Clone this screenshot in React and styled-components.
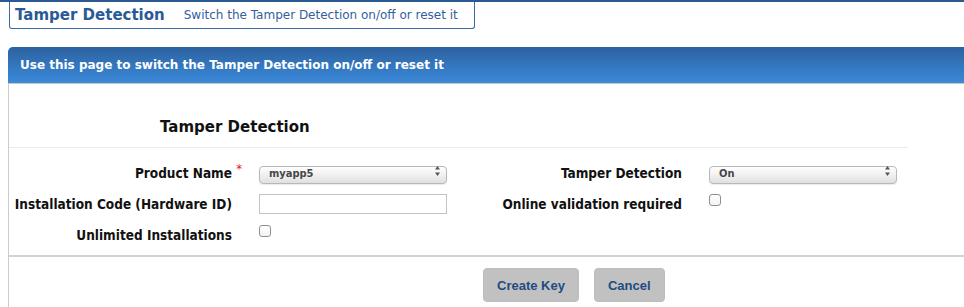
import React from 'react';
import styled, { createGlobalStyle } from 'styled-components';

const Global = createGlobalStyle`
  html, body { margin: 0; padding: 0; background: #fff; }
  body {
    font-family: "DejaVu Sans", sans-serif;
    overflow: hidden;
  }
  * { box-sizing: border-box; }
`;

const Page = styled.div`
  width: 964px;
  height: 307px;
  overflow: hidden;
  border-top: 2px solid #2b5a90;
`;

const TitleBox = styled.div`
  margin-left: 9px;
  width: 466px;
  height: 27px;
  border: 1px solid #3a6aa3;
  border-top: none;
  border-radius: 0 0 3px 3px;
  display: flex;
  align-items: center;
  gap: 19px;
  padding-left: 5px;
`;

const PageTitle = styled.span`
  font-size: 15px;
  font-weight: bold;
  color: #2a5a96;
`;

const PageSub = styled.span`
  font-size: 12px;
  color: #33609d;
`;

const Panel = styled.section`
  margin: 18px 0 0 8px;
  width: 956px;
`;

const PanelHeader = styled.div`
  height: 37px;
  border-bottom: 1px solid #c6c6c6;
  border-radius: 5px 0 0 0;
  background: linear-gradient(to bottom, #2d61a0 0%, #3478c0 55%, #3b89d9 100%);
  color: #fff;
  font-size: 12px;
  font-weight: bold;
  display: flex;
  align-items: center;
  padding-left: 12px;
`;

const PanelBody = styled.div`
  border-left: 1px solid #cccccc;
  height: 240px;
`;

const SectionTitle = styled.h2`
  margin: 0 56px 0 0;
  height: 64px;
  padding: 33px 0 0 151px;
  font-size: 15px;
  line-height: 20px;
  font-weight: bold;
  color: #111;
  border-bottom: 1px solid #ebebeb;
`;

const FormGrid = styled.div`
  display: grid;
  grid-template-columns: 250px 188px 262px 188px;
  grid-auto-rows: 31px;
  padding-top: 14px;
`;

const Label = styled.label`
  position: relative;
  text-align: right;
  padding-right: 27px;
  line-height: 22px;
  font-family: "DejaVu Sans Condensed", "DejaVu Sans", sans-serif;
  font-size: 13.5px;
  font-weight: bold;
  color: #111;
  white-space: nowrap;
`;

const Required = styled.span`
  position: absolute;
  right: 17px;
  top: 1px;
  font-size: 13px;
  line-height: 12px;
  color: #e0191b;
  font-weight: normal;
`;

const Cell = styled.div`
  position: relative;
`;

const Select = styled.select`
  appearance: none;
  -webkit-appearance: none;
  width: 188px;
  height: 18px;
  margin: 0;
  border: 1px solid #b8b8b8;
  border-radius: 4px;
  background: linear-gradient(to bottom, #fefefe 0%, #f0f0f0 50%, #e0e0e0 100%);
  box-shadow: 0 1px 1px rgba(0,0,0,0.08);
  font-family: "DejaVu Sans Condensed", "DejaVu Sans", sans-serif;
  font-size: 11px;
  font-weight: bold;
  color: #474747;
  padding: 0 0 2px 9px;
  line-height: 14px;
  outline: none;
`;

const Arrows = styled.svg`
  position: absolute;
  right: 7px;
  top: 4px;
  pointer-events: none;
`;

const TextInput = styled.input`
  width: 188px;
  height: 20px;
  margin: 0;
  border: 1px solid #c4c4c4;
  background: #fff;
  padding: 0 4px;
  outline: none;
`;

const Check = styled.input`
  appearance: none;
  -webkit-appearance: none;
  display: block;
  width: 12px;
  height: 12px;
  margin: 1px 0 0 0;
  border: 1px solid #8f8f8f;
  border-radius: 3px;
  background: linear-gradient(to bottom, #ffffff, #f2f2f2);
`;

const Divider = styled.hr`
  margin: 0;
  border: none;
  border-top: 2px solid #d2d2d2;
`;

const ButtonRow = styled.div`
  display: flex;
  gap: 15px;
  padding: 11px 0 0 474px;
`;

const Button = styled.button`
  height: 34px;
  padding: 0 13px;
  border: 1px solid #bdbdbd;
  border-radius: 4px;
  background: #c1c1c1;
  color: #1d4b82;
  font-family: "Liberation Sans", Arial, sans-serif;
  font-size: 13px;
  font-weight: bold;
`;

const SelectArrows = () => (
  <Arrows width="5" height="10" viewBox="0 0 5 10">
    <path d="M2.5 0 L5 3.5 L0 3.5 Z" fill="#555" />
    <path d="M0 6.5 L5 6.5 L2.5 10 Z" fill="#555" />
  </Arrows>
);

export default function App() {
  return (
    <>
      <Global />
      <Page>
        <TitleBox>
          <PageTitle>Tamper Detection</PageTitle>
          <PageSub>Switch the Tamper Detection on/off or reset it</PageSub>
        </TitleBox>
        <Panel>
          <PanelHeader>Use this page to switch the Tamper Detection on/off or reset it</PanelHeader>
          <PanelBody>
            <SectionTitle>Tamper Detection</SectionTitle>
            <FormGrid>
              <Label>Product Name<Required>*</Required></Label>
              <Cell>
                <Select defaultValue="myapp5">
                  <option>myapp5</option>
                </Select>
                <SelectArrows />
              </Cell>
              <Label>Tamper Detection</Label>
              <Cell>
                <Select defaultValue="On">
                  <option>On</option>
                  <option>Off</option>
                </Select>
                <SelectArrows />
              </Cell>

              <Label>Installation Code (Hardware ID)</Label>
              <Cell>
                <TextInput type="text" />
              </Cell>
              <Label>Online validation required</Label>
              <Cell>
                <Check type="checkbox" />
              </Cell>

              <Label>Unlimited Installations</Label>
              <Cell>
                <Check type="checkbox" />
              </Cell>
            </FormGrid>
            <Divider />
            <ButtonRow>
              <Button>Create Key</Button>
              <Button>Cancel</Button>
            </ButtonRow>
          </PanelBody>
        </Panel>
      </Page>
    </>
  );
}
